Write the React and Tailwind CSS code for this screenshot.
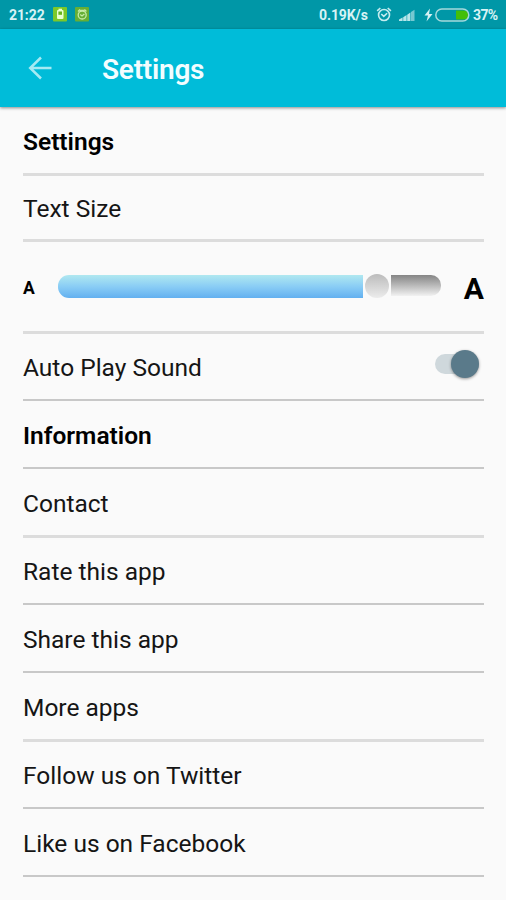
function StatusBar() {
  return (
    <div className="flex h-[29px] items-center bg-[#0097a7] pl-[9px] pr-[8px] text-[14px] font-bold leading-none text-[#d8f3f5]">
      <span className="w-[44px] tracking-[-0.1px]">21:22</span>
      <svg className="h-[15px] w-[14px]" viewBox="0 0 14 15">
        <rect width="14" height="14.5" rx="1" fill="#7cc829" />
        <rect x="4" y="3" width="6.5" height="9" rx="1" fill="#e9ffd0" />
        <rect x="5.5" y="1.7" width="3.5" height="2" fill="#e9ffd0" />
        <rect x="5.4" y="4.5" width="3.6" height="3.3" fill="#66b31b" />
      </svg>
      <svg className="ml-[8px] h-[15px] w-[14px]" viewBox="0 0 14 15">
        <rect width="14" height="14.5" rx="1" fill="#66ae35" />
        <g fill="none" stroke="#c6eba8" strokeWidth="1.3">
          <circle cx="7.2" cy="8" r="4" />
          <path d="M3 4.5 5 2.5M11.4 4.5 9.4 2.5M5.2 7.6 7 9l2.4-2M5 3.4h4.4" />
        </g>
      </svg>
      <span className="ml-auto w-[57px] whitespace-nowrap tracking-[-0.1px]">0.19K/s</span>
      <svg className="mr-[1px] h-[17px] w-[17px]" viewBox="0 0 18 17" fill="none" stroke="#c5ecef" strokeWidth="1.7">
        <circle cx="8.5" cy="9" r="5.8" />
        <path d="M1.2 4.6 4.6 1.6M15.8 4.6 12.4 1.6M5.6 8 8.2 10.5 11.8 7.2" />
      </svg>
      <svg className="ml-[5px] mt-[2px] h-[13px] w-[17px]" viewBox="0 0 17 13">
        <path d="M0 12V10.6L3.6 8.6V12ZM4.2 12V8.2L7.6 6V12ZM8.2 12V5.7L11.4 3.4V12Z" fill="#b9e6ea" />
        <path d="M12 12V3L15.5 .8V12Z" fill="#76c8d1" />
      </svg>
      <svg className="ml-[8px] h-[14px] w-[9px]" viewBox="0 0 9 14" fill="#d5f2f4">
        <path d="M6 .5.5 7.5H4L2.5 13.5 8.5 6H5Z" />
      </svg>
      <svg className="ml-[2px] h-[14px] w-[35px]" viewBox="0 0 35 14">
        <path d="M21 2.5H29A4.5 4.5 0 0 1 29 11.5H21Z" fill="#43bf0a" />
        <rect x=".8" y="1" width="33" height="12" rx="6" fill="none" stroke="#a5d9dc" strokeWidth="1.5" />
      </svg>
      <span className="ml-[3px] w-[25px] whitespace-nowrap text-[14px] tracking-[-0.6px]">37%</span>
    </div>
  );
}

function Header() {
  return (
    <header className="flex h-[78px] items-center bg-[#00bcd9] shadow-[0_1px_3px_rgba(0,0,0,0.45)]">
      <svg className="ml-[28px] h-[24px] w-[24px]" viewBox="0 0 24 24" fill="none" stroke="#a6eaf3" strokeWidth="2.5">
        <path d="M23.5 12H2.2M13 1.5 2.2 12 13 22.5" />
      </svg>
      <h1 className="ml-[50px] pt-[3px] text-[28px] font-semibold leading-none tracking-[-0.25px] text-[#f2fdff]">Settings</h1>
    </header>
  );
}

function Row({ label, className }) {
  return (
    <div className={`flex items-center text-[24.5px] ${className}`}>
      <span className="whitespace-nowrap">{label}</span>
    </div>
  );
}

const thick = "border-b-[3px] border-[#dcdcdc]";
const thin = "border-b-2 border-[#c8c8c8]";

export default function App() {
  return (
    <div className="h-[900px] w-[506px] overflow-hidden bg-[#fafafa] font-['Roboto',sans-serif] text-[#151515]">
      <StatusBar />
      <Header />
      <main className="pl-[23px] pr-[22px]">
        <Row label="Settings" className={`h-[69px] pt-[5px] font-semibold text-black ${thick}`} />
        <Row label="Text Size" className={`h-[66px] pt-[3px] ${thick}`} />
        <div className={`flex h-[92px] items-center ${thick}`}>
          <span className="w-[35px] pt-[4px] text-[17.5px] font-bold leading-none text-black">A</span>
          <div className="flex items-center">
            <div className="h-[23px] w-[305px] rounded-l-[11px] bg-linear-to-b from-[#b0e8f0] via-[#8acdf5] to-[#62b0f0]" />
            <div className="mx-[2px] mb-[2px] h-[24px] w-[24px] rounded-full bg-linear-to-b from-[#bcbcbc] to-[#ececec]" />
            <div className="mb-[2px] h-[21px] w-[50px] rounded-r-[10px] bg-linear-to-b from-[#858585] to-[#f2f2f2]" />
          </div>
          <span className="ml-auto pt-[4px] text-[30px] font-bold leading-none text-black">A</span>
        </div>
        <div className={`flex h-[67px] items-center justify-between text-[24.5px] ${thin}`}>
          <span className="pt-[4px]">Auto Play Sound</span>
          <div className="mb-[5px] mr-[5px] flex h-[20px] w-[44px] items-center justify-end rounded-full bg-[#cfd8dc]">
            <div className="h-[28px] w-[28px] shrink-0 rounded-full bg-[#5a7a8a] shadow-[0_1px_3px_rgba(0,0,0,0.4)]" />
          </div>
        </div>
        <Row label="Information" className={`h-[68px] pt-[5px] font-semibold text-black ${thin}`} />
        <Row label="Contact" className={`h-[69px] pt-[5px] ${thick}`} />
        <Row label="Rate this app" className={`h-[67px] pt-[3px] ${thin}`} />
        <Row label="Share this app" className={`h-[68px] pt-[5px] ${thin}`} />
        <Row label="More apps" className={`h-[69px] pt-[5px] ${thick}`} />
        <Row label="Follow us on Twitter" className={`h-[67px] pt-[3px] ${thin}`} />
        <Row label="Like us on Facebook" className={`h-[68px] pt-[5px] ${thin}`} />
      </main>
    </div>
  );
}
